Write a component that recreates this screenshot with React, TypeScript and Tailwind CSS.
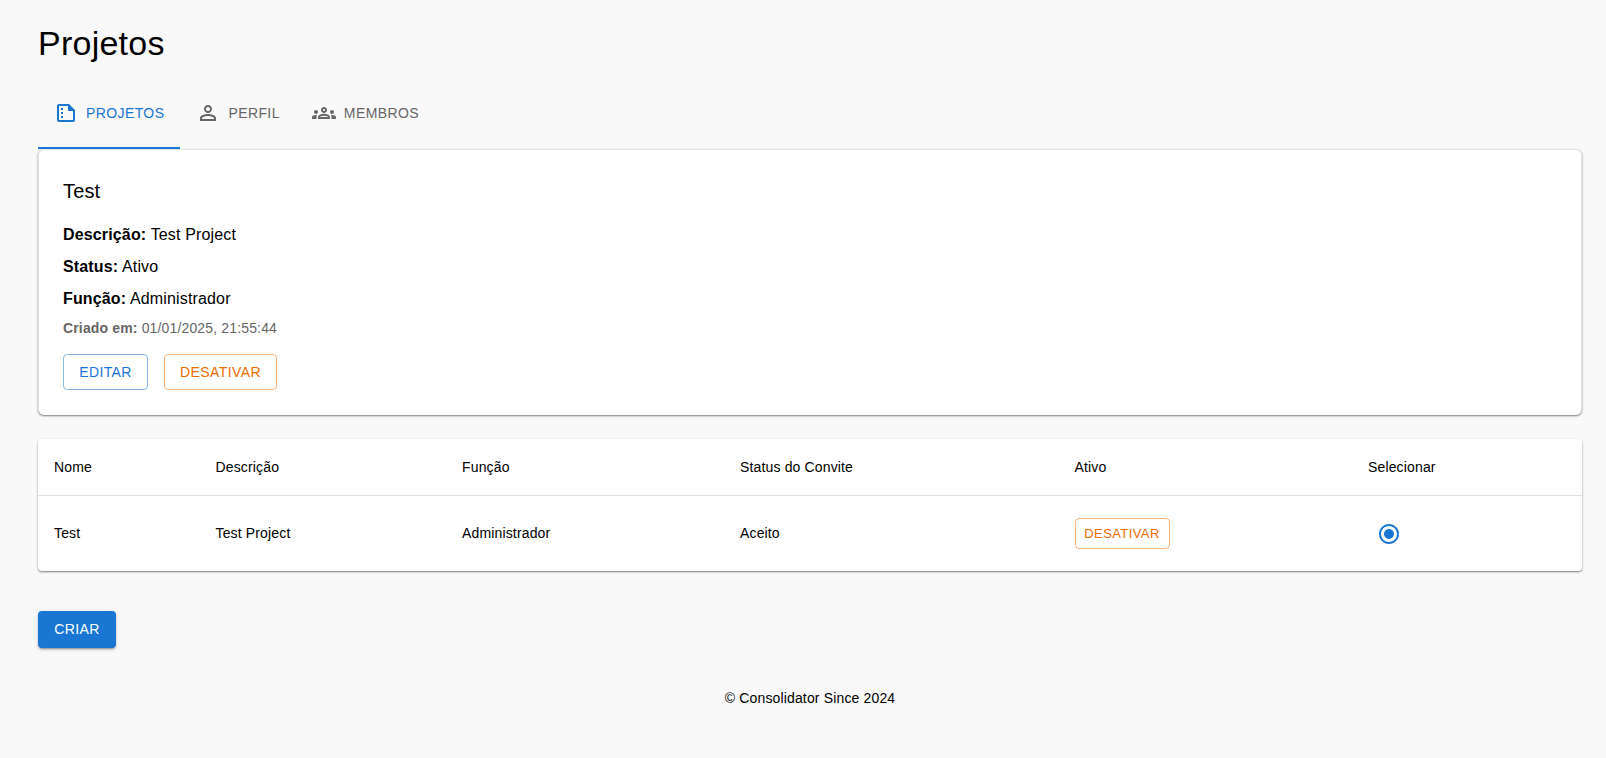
const sans = "font-['Liberation_Sans',Arial,sans-serif]"

function ProjectIcon() {
  return (
    <svg viewBox="0 0 24 24" className="w-6 h-6 fill-current">
      <path d="M15 3H5c-1.1 0-2 .9-2 2v14c0 1.1.9 2 2 2h14c1.1 0 2-.9 2-2V9zM5 19V5h9v5h5v9zM7 7h2v2H7zm0 4h2v2H7zm0 4h2v2H7z" />
    </svg>
  )
}

function PersonIcon() {
  return (
    <svg viewBox="0 0 24 24" className="w-6 h-6 fill-current">
      <path d="M12 5.9c1.16 0 2.1.94 2.1 2.1s-.94 2.1-2.1 2.1S9.9 9.16 9.9 8s.94-2.1 2.1-2.1m0 9c2.97 0 6.1 1.46 6.1 2.1v1.1H5.9V17c0-.64 3.13-2.1 6.1-2.1M12 4C9.79 4 8 5.79 8 8s1.79 4 4 4 4-1.79 4-4-1.79-4-4-4m0 9c-2.67 0-8 1.34-8 4v3h16v-3c0-2.66-5.33-4-8-4" />
    </svg>
  )
}

function GroupsIcon() {
  return (
    <svg viewBox="0 0 24 24" className="w-6 h-6 fill-current">
      <path d="M4 13c1.1 0 2-.9 2-2s-.9-2-2-2-2 .9-2 2 .9 2 2 2m1.13 1.1c-.37-.06-.74-.1-1.13-.1-.99 0-1.93.21-2.78.58C.48 14.9 0 15.62 0 16.43V18h4.5v-1.61c0-.83.23-1.61.63-2.29M20 13c1.1 0 2-.9 2-2s-.9-2-2-2-2 .9-2 2 .9 2 2 2m4 3.43c0-.81-.48-1.53-1.22-1.85-.85-.37-1.79-.58-2.78-.58-.39 0-.76.04-1.13.1.4.68.63 1.46.63 2.29V18H24zm-7.76-2.78c-1.17-.52-2.61-.9-4.24-.9s-3.07.39-4.24.9C6.68 14.13 6 15.21 6 16.39V18h12v-1.61c0-1.18-.68-2.26-1.76-2.74M8.07 16c.09-.23.13-.39.91-.69.97-.38 1.99-.56 3.02-.56s2.05.18 3.02.56c.77.3.81.46.91.69zM12 8c.55 0 1 .45 1 1s-.45 1-1 1-1-.45-1-1 .45-1 1-1m0-2c-1.66 0-3 1.34-3 3s1.34 3 3 3 3-1.34 3-3-1.34-3-3-3" />
    </svg>
  )
}

function Tab({ icon, label, active }: { icon: React.ReactNode; label: string; active?: boolean }) {
  return (
    <div
      className={`relative flex items-center gap-2 h-[72px] px-4 text-[14px] tracking-[0.4px] ${
        active ? 'text-[#1976d2]' : 'text-[#666666]'
      }`}
    >
      {icon}
      <span>{label}</span>
      {active && <span className="absolute left-0 right-0 bottom-0 h-0.5 bg-[#1976d2]" />}
    </div>
  )
}

const columns = ['w-[161.5px]', 'w-[246.5px]', 'w-[278px]', 'w-[334.5px]', 'w-[293.5px]']

export default function App() {
  return (
    <div className={`min-h-[758px] bg-[#f9f9f9] pl-[38px] pr-6 text-black ${sans}`}>
      <h1 className="pt-[21px] text-[34px] leading-[44px] tracking-[0.25px]">Projetos</h1>

      <div className="flex mt-[12px]">
        <Tab icon={<ProjectIcon />} label="PROJETOS" active />
        <Tab icon={<PersonIcon />} label="PERFIL" />
        <Tab icon={<GroupsIcon />} label="MEMBROS" />
      </div>

      <section className="h-[266px] rounded-[6px] bg-white p-6 border border-[#e4e4e4] border-b-0 tracking-[0.15px] shadow-[0_1px_2px_rgba(0,0,0,0.5)]">
        <h2 className="text-[20px] leading-[30px] mt-[2px]">Test</h2>
        <p className="mt-[17px] text-[16px] leading-6"><strong>Descrição:</strong> Test Project</p>
        <p className="mt-2 text-[16px] leading-6"><strong>Status:</strong> Ativo</p>
        <p className="mt-[8px] text-[16px] leading-6"><strong>Função:</strong> Administrador</p>
        <p className="mt-[7px] text-[14px] leading-5 text-[#666666]"><strong>Criado em:</strong> 01/01/2025, 21:55:44</p>
        <div className="flex gap-4 mt-[16px]">
          <button className="h-[36px] w-[85px] rounded border border-[#1976d2]/50 text-[14px] tracking-[0.4px] text-[#1976d2]">EDITAR</button>
          <button className="h-[36px] w-[113px] rounded border border-[#ed6c02]/50 text-[14px] tracking-[0.4px] text-[#ed6c02]">DESATIVAR</button>
        </div>
      </section>

      <section className="mt-6 rounded bg-white tracking-[0.15px] shadow-[0_1px_2px_rgba(0,0,0,0.5)]">
        <div className="flex items-center h-[57px] px-4 border-b border-[#e0e0e0] text-[14px]">
          {['Nome', 'Descrição', 'Função', 'Status do Convite', 'Ativo'].map((h, i) => (
            <div key={h} className={columns[i]}>{h}</div>
          ))}
          <div>Selecionar</div>
        </div>
        <div className="flex items-center h-[75px] px-4 text-[14px]">
          <div className={columns[0]}>Test</div>
          <div className={columns[1]}>Test Project</div>
          <div className={columns[2]}>Administrador</div>
          <div className={columns[3]}>Aceito</div>
          <div className={columns[4]}>
            <button className="h-[31px] w-[95px] rounded border border-[#ed6c02]/50 text-[13px] tracking-[0.4px] text-[#ed6c02]">DESATIVAR</button>
          </div>
          <svg viewBox="0 0 24 24" className="w-6 h-6 ml-[9px] fill-[#1976d2]">
            <path d="M12 2C6.48 2 2 6.48 2 12s4.48 10 10 10 10-4.48 10-10S17.52 2 12 2m0 18c-4.42 0-8-3.58-8-8s3.58-8 8-8 8 3.58 8 8-3.58 8-8 8" />
            <circle cx="12" cy="12" r="5" />
          </svg>
        </div>
      </section>

      <button className="block mt-[40px] h-[37px] w-[78px] rounded bg-[#1976d2] text-white text-[14px] tracking-[0.4px] shadow-[0_3px_1px_-2px_rgba(0,0,0,0.2),0_2px_2px_0_rgba(0,0,0,0.14),0_1px_5px_0_rgba(0,0,0,0.12)]">CRIAR</button>

      <footer className="mt-[40px] text-center text-[14px] leading-5 tracking-[0.15px]">© Consolidator Since 2024</footer>
    </div>
  )
}
